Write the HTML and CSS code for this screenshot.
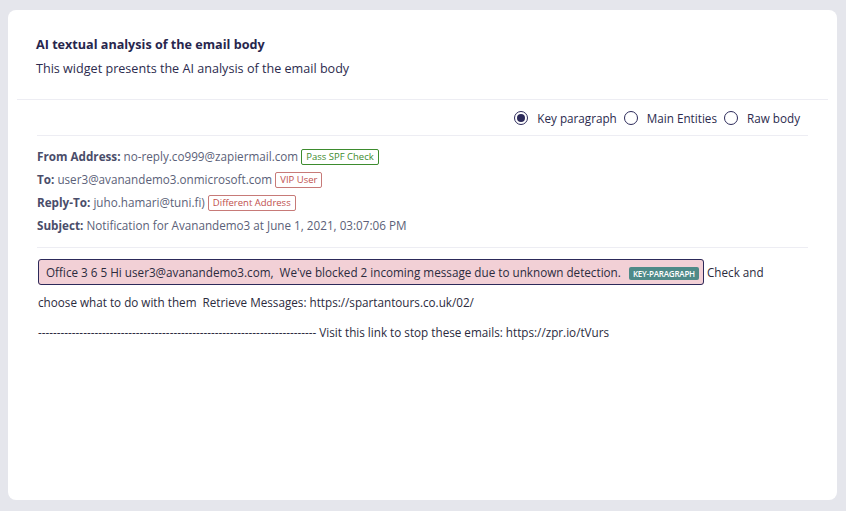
FILE: index.html
```html
<!DOCTYPE html>
<html>
<head>
<meta charset="utf-8">
<link rel="stylesheet" href="styles.css">
</head>
<body>
<div class="card">
  <div class="header">
    <div class="title">AI textual analysis of the email body</div>
    <div class="subtitle">This widget presents the AI analysis of the email body</div>
  </div>
  <div class="content">
    <div class="radios">
      <label class="radio"><span class="dot checked"></span>Key paragraph</label>
      <label class="radio"><span class="dot"></span>Main Entities</label>
      <label class="radio"><span class="dot"></span>Raw body</label>
    </div>
    <div class="meta">
      <div class="row"><b>From Address:</b> no-reply.co999@zapiermail.com <span class="tag green">Pass SPF Check</span></div>
      <div class="row"><b>To:</b> user3@avanandemo3.onmicrosoft.com <span class="tag red">VIP User</span></div>
      <div class="row"><b>Reply-To:</b> juho.hamari@tuni.fi) <span class="tag red">Different Address</span></div>
      <div class="row"><b>Subject:</b> Notification for Avanandemo3 at June 1, 2021, 03:07:06 PM</div>
    </div>
    <div class="body-text"><span class="key">Office 3 6 5 Hi user3@avanandemo3.com,&nbsp; We've blocked 2 incoming message due to unknown detection. <span class="kp">KEY-PARAGRAPH</span></span> Check and choose what to do with them&nbsp; Retrieve Messages: https://spartantours.co.uk/02/<br>-------------------------------------------------------------------------- Visit this link to stop these emails: https://zpr.io/tVurs</div>
  </div>
</div>
</body>
</html>
```
FILE: styles.css
```css
* { box-sizing: border-box; }
html, body { margin: 0; }
body {
  background: #e5e6ec;
  padding: 10px 9px 11px 8px;
  font-family: "Open Sans", "Noto Sans", sans-serif;
  font-size: 11.7px;
  color: #2c2b4e;
}
.card {
  background: #fff;
  border-radius: 8px;
  height: 490px;
  padding: 0 9px;
}
.header {
  padding: 27px 19px 22px;
  border-bottom: 1px solid #ededf3;
  font-size: 12.6px;
}
.title {
  font-weight: 700;
  line-height: 16px;
  color: #27264d;
}
.subtitle {
  margin-top: 8px;
  line-height: 16px;
  color: #2c2b4e;
}
.content {
  padding: 0 20px;
}
.radios {
  display: flex;
  justify-content: flex-end;
  align-items: center;
  gap: 7px;
  height: 36px;
  padding-top: 1px;
  padding-right: 8px;
  border-bottom: 1px solid #ededf3;
  color: #2c2b4e;
}
.radio {
  display: flex;
  align-items: center;
  gap: 9px;
}
.dot {
  width: 14px;
  height: 14px;
  border: 1.5px solid #2c2a5a;
  border-radius: 50%;
  display: inline-flex;
  align-items: center;
  justify-content: center;
}
.dot.checked::after {
  content: "";
  width: 8px;
  height: 8px;
  border-radius: 50%;
  background: #2c2a5a;
}
.meta {
  padding: 9px 0 10px;
  border-bottom: 1px solid #ededf3;
  color: #5b5f78;
}
.row {
  height: 23px;
  line-height: 23px;
}
.row b { color: #4a4d6a; font-weight: 700; }
.tag {
  display: inline-block;
  font-size: 9.5px;
  line-height: 14px;
  padding: 0 4px;
  border: 1px solid;
  border-radius: 2px;
  vertical-align: 1px;
}
.tag.green { color: #3d8b2e; border-color: #3d8b2e; }
.tag.red { color: #c0504d; border-color: #c77a78; }
.body-text {
  padding: 9px 8px 0 1px;
  line-height: 30px;
  color: #2b2b3d;
}
.key {
  background: #f2d0d6;
  border: 1px solid #2c2a5a;
  border-radius: 3px;
  padding: 4px 4px 4px 7px;
}
.kp {
  display: inline-block;
  background: #4f8a88;
  color: #fff;
  font-size: 8px;
  font-weight: 600;
  line-height: 13px;
  padding: 0 4px;
  border-radius: 2px;
  margin-left: 5px;
  letter-spacing: -0.2px;
}
```
